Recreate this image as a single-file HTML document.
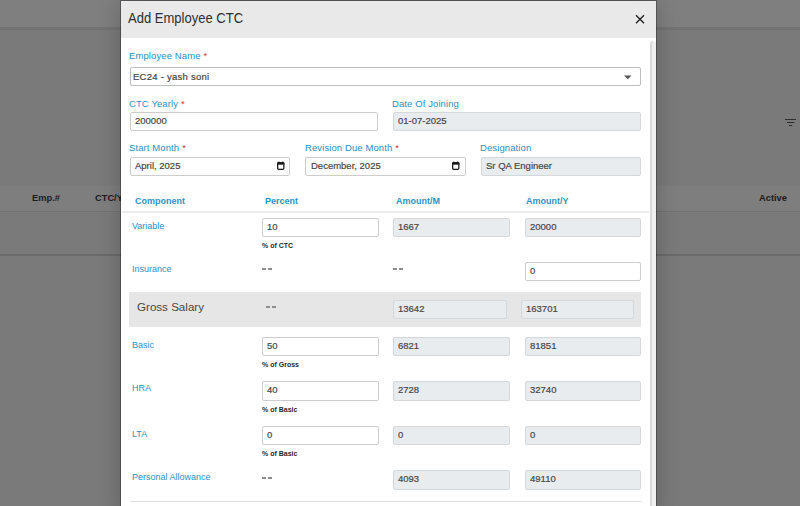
<!DOCTYPE html>
<html><head><meta charset="utf-8">
<style>
*{box-sizing:border-box;margin:0;padding:0}
html,body{width:800px;height:506px;overflow:hidden;background:#7a7a7a;font-family:"Liberation Sans",sans-serif}
.a{position:absolute;white-space:nowrap;line-height:1}
.bgtop{left:0;top:0;width:800px;height:27px;background:#7f7f7f}
.bgline{left:0;top:27px;width:800px;height:3px;background:#737373}
.thband{left:0;top:186px;width:800px;height:25px;background:#7e7e7e}
.thline{left:0;top:211px;width:800px;height:1px;background:#717171}
.tline2{left:0;top:254px;width:800px;height:2px;background:#6a6a6a}
.bgtxt{font-weight:bold;font-size:9.3px;color:#1c1c1c}
.shadow{left:121px;top:1px;width:535px;height:520px;box-shadow:0 0 0 1px rgba(0,0,0,.28),0 0 22px rgba(0,0,0,.22)}
.modal{left:121px;top:1px;width:535px;height:520px;background:#fff;overflow:hidden}
.mhead{left:0;top:0;width:535px;height:37px;background:#e9e9e9}
.title{left:7px;top:10px;font-size:14px;color:#2e2e2e;transform:scaleX(.93);transform-origin:0 0}
.close{left:514px;top:13px;width:10px;height:10px}
.lbl{font-size:9.5px;color:#2b8fc3;letter-spacing:.1px}
.req{color:#d23a3a;font-size:9.5px;margin-left:3px;letter-spacing:0}
.inp{border:1px solid #cdcdcd;border-radius:2px;background:#fff;height:19px}
.dis{background:#e9ecef;border-color:#d5d8db}
.it{font-size:9.5px;color:#474747;-webkit-text-stroke:.2px #474747}
.th{font-size:9px;font-weight:bold;color:#2f92c6}
.tl{font-size:9px;color:#2d90c4}
.sub{font-size:7px;font-weight:bold;color:#2a2a2a}
.dash{width:10px;height:2px}
.dash:before,.dash:after{content:"";position:absolute;top:0;width:4px;height:2px;background:#8e8e8e}
.dash:after{left:6px}
.sb{left:529px;top:40px;width:6px;height:480px;border-left:2px solid #dadada;border-top-left-radius:3px;border-top-right-radius:3px;background:#f0f0f0}
.cal{width:8px;height:10px}
</style></head><body>
<div class="a bgtop"></div>
<div class="a bgline"></div>
<div class="a thband"></div>
<div class="a thline"></div>
<div class="a tline2"></div>
<div class="a bgtxt" style="left:32px;top:194px">Emp.#</div>
<div class="a bgtxt" style="left:95px;top:194px">CTC/Y</div>
<div class="a bgtxt" style="left:759px;top:194px">Active</div>
<svg class="a" style="left:784px;top:117px" width="13" height="10" viewBox="0 0 13 10"><path d="M1 2.5H12M3 5.5H10.3M5 8.5H8.2" stroke="#2e2e2e" stroke-width="1.1"/></svg>

<div class="a shadow"></div>
<div class="a modal">
  <div class="a mhead"></div>
  <div class="a title">Add Employee CTC</div>
  <svg class="a close" viewBox="0 0 10 10"><path d="M1 1.2L9 9.2M9 1.2L1 9.2" stroke="#1e1e1e" stroke-width="1.3"/></svg>

  <div class="a lbl" style="left:8px;top:50px;letter-spacing:.1px">Employee Name<span class="req">*</span></div>
  <div class="a inp" style="left:9px;top:66px;width:511px;border-color:#bcbcbc"></div>
  <div class="a it" style="left:12px;top:71px;letter-spacing:.25px">EC24 - yash soni</div>
  <svg class="a" style="left:503px;top:74px" width="8" height="5" viewBox="0 0 8 5"><path d="M0 0.5H7.5L3.75 4.2Z" fill="#555"/></svg>

  <div class="a lbl" style="left:8px;top:98px">CTC Yearly<span class="req">*</span></div>
  <div class="a inp" style="left:9px;top:111px;width:248px"></div>
  <div class="a it" style="left:14px;top:115px">200000</div>
  <div class="a lbl" style="left:271px;top:98px">Date Of Joining</div>
  <div class="a inp dis" style="left:272px;top:111px;width:248px"></div>
  <div class="a it" style="left:277px;top:115px">01-07-2025</div>

  <div class="a lbl" style="left:8px;top:142px">Start Month<span class="req">*</span></div>
  <div class="a inp" style="left:9px;top:156px;width:160px"></div>
  <div class="a it" style="left:14px;top:160px">April, 2025</div>
  <svg class="a cal" style="left:156px;top:160px" width="8" height="10" viewBox="0 0 8 10"><rect x="0.65" y="1.5" width="6.2" height="6.9" rx="1.1" fill="none" stroke="#1a1a1a" stroke-width="1.25"/><rect x="0.2" y="1.5" width="7.1" height="2.2" fill="#1a1a1a"/><rect x="1.2" y="0.6" width="1.3" height="1.2" fill="#1a1a1a"/><rect x="5" y="0.6" width="1.3" height="1.2" fill="#1a1a1a"/></svg>
  <div class="a lbl" style="left:184px;top:142px">Revision Due Month<span class="req">*</span></div>
  <div class="a inp" style="left:184px;top:156px;width:161px"></div>
  <div class="a it" style="left:190px;top:160px">December, 2025</div>
  <svg class="a cal" style="left:331px;top:160px" width="8" height="10" viewBox="0 0 8 10"><rect x="0.65" y="1.5" width="6.2" height="6.9" rx="1.1" fill="none" stroke="#1a1a1a" stroke-width="1.25"/><rect x="0.2" y="1.5" width="7.1" height="2.2" fill="#1a1a1a"/><rect x="1.2" y="0.6" width="1.3" height="1.2" fill="#1a1a1a"/><rect x="5" y="0.6" width="1.3" height="1.2" fill="#1a1a1a"/></svg>
  <div class="a lbl" style="left:359px;top:142px">Designation</div>
  <div class="a inp dis" style="left:360px;top:156px;width:160px"></div>
  <div class="a it" style="left:365px;top:160px">Sr QA Engineer</div>

  <div class="a th" style="left:14px;top:196px">Component</div>
  <div class="a th" style="left:144px;top:196px">Percent</div>
  <div class="a th" style="left:275px;top:196px">Amount/M</div>
  <div class="a th" style="left:405px;top:196px">Amount/Y</div>
  <div class="a" style="left:1px;top:210px;width:527px;height:2px;background:#ececec"></div>

  <div class="a tl" style="left:11px;top:221px">Variable</div>
  <div class="a inp" style="left:141px;top:217px;width:117px"></div>
  <div class="a it" style="left:146px;top:221px">10</div>
  <div class="a sub" style="left:141px;top:241px">% of CTC</div>
  <div class="a inp dis" style="left:272px;top:217px;width:117px"></div>
  <div class="a it" style="left:277px;top:221px">1667</div>
  <div class="a inp dis" style="left:404px;top:217px;width:116px"></div>
  <div class="a it" style="left:409px;top:221px">20000</div>

  <div class="a tl" style="left:11px;top:264px">Insurance</div>
  <div class="a dash" style="left:141px;top:267px"></div>
  <div class="a dash" style="left:272px;top:267px"></div>
  <div class="a inp" style="left:404px;top:261px;width:116px"></div>
  <div class="a it" style="left:409px;top:265px">0</div>

  <div class="a" style="left:8px;top:291px;width:512px;height:35px;background:#e6e6e6"></div>
  <div class="a" style="left:16px;top:300px;font-size:11.6px;color:#474747">Gross Salary</div>
  <div class="a dash" style="left:145px;top:305px"></div>
  <div class="a inp dis" style="left:272px;top:299px;width:114px"></div>
  <div class="a it" style="left:277px;top:303px">13642</div>
  <div class="a inp dis" style="left:400px;top:299px;width:113px"></div>
  <div class="a it" style="left:405px;top:303px">163701</div>

  <div class="a tl" style="left:11px;top:340px">Basic</div>
  <div class="a inp" style="left:141px;top:336px;width:117px"></div>
  <div class="a it" style="left:146px;top:340px">50</div>
  <div class="a sub" style="left:141px;top:360px">% of Gross</div>
  <div class="a inp dis" style="left:272px;top:336px;width:117px"></div>
  <div class="a it" style="left:277px;top:340px">6821</div>
  <div class="a inp dis" style="left:404px;top:336px;width:116px"></div>
  <div class="a it" style="left:409px;top:340px">81851</div>

  <div class="a tl" style="left:11px;top:383px">HRA</div>
  <div class="a inp" style="left:141px;top:380px;width:117px;height:20px"></div>
  <div class="a it" style="left:146px;top:384px">40</div>
  <div class="a sub" style="left:141px;top:405px">% of Basic</div>
  <div class="a inp dis" style="left:272px;top:380px;width:117px;height:20px"></div>
  <div class="a it" style="left:277px;top:384px">2728</div>
  <div class="a inp dis" style="left:404px;top:380px;width:116px;height:20px"></div>
  <div class="a it" style="left:409px;top:384px">32740</div>

  <div class="a tl" style="left:11px;top:429px">LTA</div>
  <div class="a inp" style="left:141px;top:425px;width:117px"></div>
  <div class="a it" style="left:146px;top:429px">0</div>
  <div class="a sub" style="left:141px;top:449px">% of Basic</div>
  <div class="a inp dis" style="left:272px;top:425px;width:117px"></div>
  <div class="a it" style="left:277px;top:429px">0</div>
  <div class="a inp dis" style="left:404px;top:425px;width:116px"></div>
  <div class="a it" style="left:409px;top:429px">0</div>

  <div class="a tl" style="left:11px;top:472px">Personal Allowance</div>
  <div class="a dash" style="left:141px;top:476px"></div>
  <div class="a inp dis" style="left:272px;top:469px;width:117px;height:20px"></div>
  <div class="a it" style="left:277px;top:473px">4093</div>
  <div class="a inp dis" style="left:404px;top:469px;width:116px;height:20px"></div>
  <div class="a it" style="left:409px;top:473px">49110</div>
  <div class="a" style="left:9px;top:500px;width:512px;height:1px;background:#e0e0e0"></div>

  <div class="a sb"></div>
</div>
</body></html>
